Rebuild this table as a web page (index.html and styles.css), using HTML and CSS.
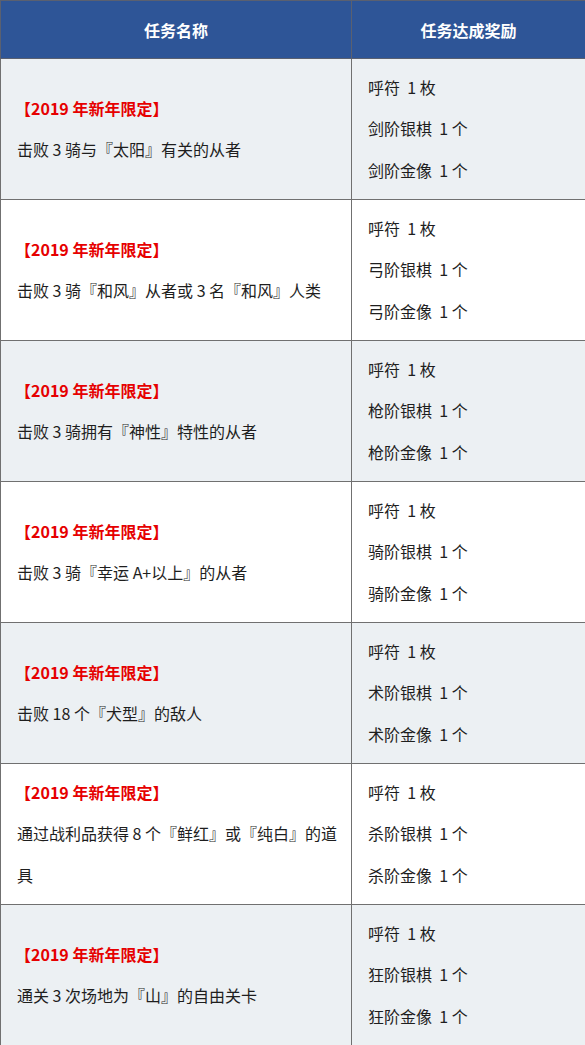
FILE: index.html
```html
<!DOCTYPE html>
<html lang="zh">
<head>
<meta charset="utf-8">
<title>任务</title>
<link rel="stylesheet" href="styles.css">
</head>
<body>
<table class="tasks">
  <colgroup><col class="c1"><col class="c2"></colgroup>
  <thead>
    <tr><th>任务名称</th><th>任务达成奖励</th></tr>
  </thead>
  <tbody>
    <tr class="odd">
      <td><p class="tag">【2019 年新年限定】</p><p>击败 3 骑与『太阳』有关的从者</p></td>
      <td><p>呼符&nbsp; 1 枚</p><p>剑阶银棋&nbsp; 1 个</p><p>剑阶金像&nbsp; 1 个</p></td>
    </tr>
    <tr>
      <td><p class="tag">【2019 年新年限定】</p><p>击败 3 骑『和风』从者或 3 名『和风』人类</p></td>
      <td><p>呼符&nbsp; 1 枚</p><p>弓阶银棋&nbsp; 1 个</p><p>弓阶金像&nbsp; 1 个</p></td>
    </tr>
    <tr class="odd">
      <td><p class="tag">【2019 年新年限定】</p><p>击败 3 骑拥有『神性』特性的从者</p></td>
      <td><p>呼符&nbsp; 1 枚</p><p>枪阶银棋&nbsp; 1 个</p><p>枪阶金像&nbsp; 1 个</p></td>
    </tr>
    <tr>
      <td><p class="tag">【2019 年新年限定】</p><p>击败 3 骑『幸运 A+以上』的从者</p></td>
      <td><p>呼符&nbsp; 1 枚</p><p>骑阶银棋&nbsp; 1 个</p><p>骑阶金像&nbsp; 1 个</p></td>
    </tr>
    <tr class="odd">
      <td><p class="tag">【2019 年新年限定】</p><p>击败 18 个『犬型』的敌人</p></td>
      <td><p>呼符&nbsp; 1 枚</p><p>术阶银棋&nbsp; 1 个</p><p>术阶金像&nbsp; 1 个</p></td>
    </tr>
    <tr>
      <td><p class="tag">【2019 年新年限定】</p><p>通过战利品获得 8 个『鲜红』或『纯白』的道具</p></td>
      <td><p>呼符&nbsp; 1 枚</p><p>杀阶银棋&nbsp; 1 个</p><p>杀阶金像&nbsp; 1 个</p></td>
    </tr>
    <tr class="odd">
      <td><p class="tag">【2019 年新年限定】</p><p>通关 3 次场地为『山』的自由关卡</p></td>
      <td><p>呼符&nbsp; 1 枚</p><p>狂阶银棋&nbsp; 1 个</p><p>狂阶金像&nbsp; 1 个</p></td>
    </tr>
  </tbody>
</table>
</body>
</html>
```
FILE: styles.css
```css
html, body {
  margin: 0;
  padding: 0;
  background: #ffffff;
}
body {
  font-family: "Noto Sans CJK SC", "Noto Sans", sans-serif;
  font-size: 16px;
  color: #1e1e1e;
}
.tasks {
  width: 585px;
  border-collapse: collapse;
  table-layout: fixed;
}
.c1 { width: 351px; }
.c2 { width: 234px; }
.tasks th {
  background: #2e5597;
  color: #ffffff;
  font-weight: bold;
  font-size: 16px;
  height: 57px;
  padding: 0;
  border: 1px solid #5a6070;
  text-align: center;
  vertical-align: middle;
}
.tasks td {
  border: 1px solid #707070;
  padding: 8px 16px;
  height: 124px;
  vertical-align: middle;
  text-align: left;
}
.tasks td:first-child {
  padding-right: 6px;
}
.tasks tr.odd td {
  background: #ecf0f3;
}
.tasks p {
  margin: 0;
  line-height: 41.25px;
}
.tasks p.tag {
  color: #e60000;
  font-weight: bold;
  margin-left: -2px;
}
```
